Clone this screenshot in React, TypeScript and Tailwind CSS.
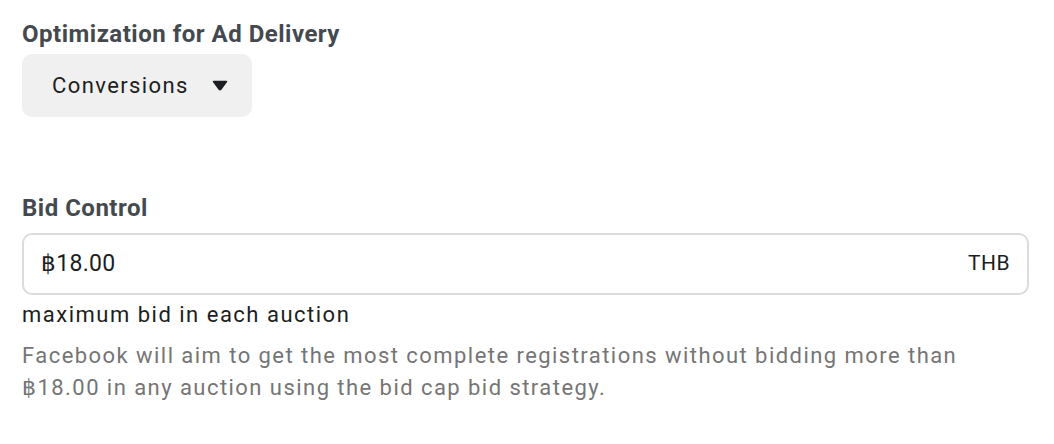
import React from 'react';

const font = { fontFamily: 'Roboto, "Liberation Sans", sans-serif' };

export default function App() {
  return (
    <div className="w-[1054px] h-[444px] bg-white pl-[22px] pr-[25px] pt-[18px]" style={font}>
      <h3 className="text-[24px] leading-[32px] font-bold tracking-[0.5px] text-[#444950]">Optimization for Ad Delivery</h3>
      <button className="mt-[4px] h-[63px] w-[230px] rounded-[10px] bg-[#f0f0f0] flex items-center pl-[30px] gap-[23px] text-[22px] tracking-[1.4px] text-[#1c1e21]">
        <span>Conversions</span>
        <svg width="16" height="11" viewBox="0 0 16 11">
          <path d="M1.5 1.5 H14.5 L9 9 Q8 10.3 7 9 Z" fill="#1c1e21" stroke="#1c1e21" strokeWidth="1.5" strokeLinejoin="round" />
        </svg>
      </button>
      <h3 className="mt-[75px] text-[24px] leading-[32px] font-bold tracking-[0.5px] text-[#444950]">Bid Control</h3>
      <div className="mt-[9px] h-[62px] rounded-[10px] border-2 border-[#dcdcdc] flex items-center justify-between pl-[17px] pr-[17px]">
        <span className="text-[23px] tracking-[0.3px] text-[#1c1e21]">฿18.00</span>
        <span className="text-[21px] tracking-[0.5px] text-[#1c1e21]">THB</span>
      </div>
      <p className="mt-[4px] text-[22px] leading-[32px] tracking-[1.5px] text-[#1c1e21]">maximum bid in each auction</p>
      <p className="mt-[9px] text-[22px] leading-[32px] tracking-[1.45px] text-[#757575]">
        Facebook will aim to get the most complete registrations without bidding more than ฿18.00 in any auction using the bid cap bid strategy.
      </p>
    </div>
  );
}
